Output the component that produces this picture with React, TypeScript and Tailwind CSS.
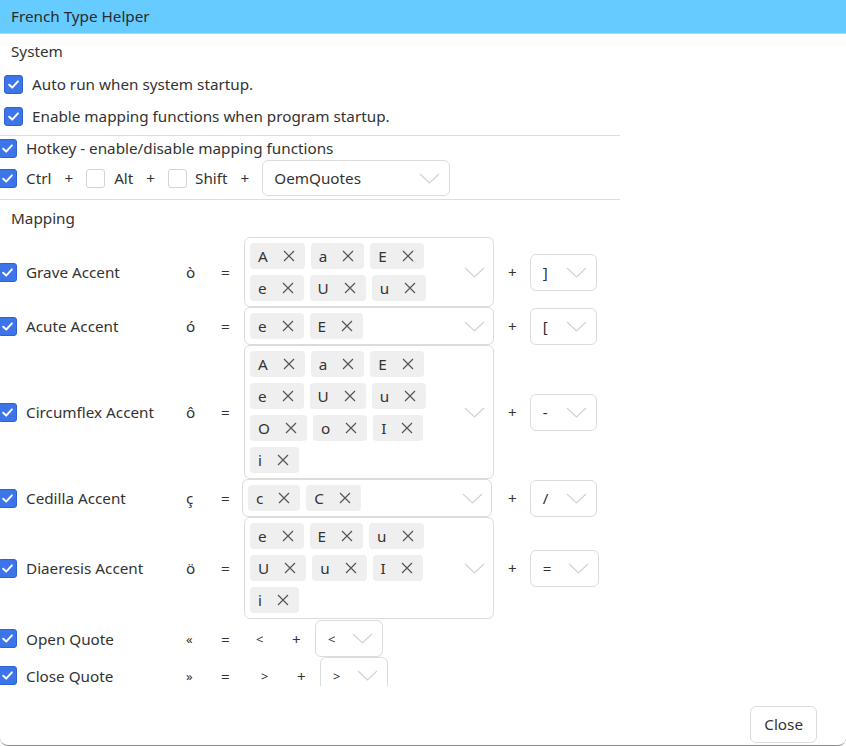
import type { ReactNode } from 'react'

const font = { fontFamily: '"Noto Sans", "Open Sans", sans-serif' }

function Check({ checked = true, className = '' }: { checked?: boolean; className?: string }) {
  if (!checked) {
    return <span className={`inline-block w-[19px] h-[19px] shrink-0 rounded-[3px] border border-[#d4d4d4] bg-white ${className}`} />
  }
  return (
    <span className={`inline-flex items-center justify-center w-[19px] h-[19px] shrink-0 rounded-[3px] bg-[#3c75ea] border border-[#2f62cf] ${className}`}>
      <svg width="13" height="13" viewBox="0 0 13 13" fill="none">
        <path d="M2.2 6.8 L5.2 9.6 L10.9 3.4" stroke="white" strokeWidth="2" strokeLinecap="round" strokeLinejoin="round" />
      </svg>
    </span>
  )
}

function Chevron() {
  return (
    <svg width="21" height="11" viewBox="0 0 21 11" fill="none" className="shrink-0">
      <path d="M1 1 L10.5 10 L20 1" stroke="#d2d2d2" strokeWidth="1.2" />
    </svg>
  )
}

function XIcon() {
  return (
    <svg width="12" height="12" viewBox="0 0 12 12" fill="none" className="shrink-0">
      <path d="M1 1 L11 11 M11 1 L1 11" stroke="#555" strokeWidth="1.2" />
    </svg>
  )
}

function Chip({ label }: { label: string }) {
  return (
    <span className="inline-flex items-center h-[26px] pl-[8px] pr-[10px] rounded-[4px] bg-[#efefef] text-[#333]">
      <span>{label}</span>
      <span className="ml-[15px]"><XIcon /></span>
    </span>
  )
}

function KeySelect({ value, className = '' }: { value: string; className?: string }) {
  return (
    <div className={`inline-flex items-center h-[37px] pl-[12px] pr-[9px] border border-[#dcdcdc] rounded-[6px] bg-white ${className}`}>
      <span className="text-[#333] min-w-[6px]">{value}</span>
      <span className="ml-[17px]"><Chevron /></span>
    </div>
  )
}

function MultiBox({ rows, className = '' }: { rows: string[][]; className?: string }) {
  return (
    <div className={`flex items-center w-[250px] border border-[#dcdcdc] rounded-[6px] pl-[5px] pr-[8px] py-[5px] ${className}`}>
      <div className="flex-1 flex flex-col gap-[6px]">
        {rows.map((r, i) => (
          <div key={i} className="flex gap-[6px]">
            {r.map((c, j) => <Chip key={j} label={c} />)}
          </div>
        ))}
      </div>
      <Chevron />
    </div>
  )
}

function MapRow({ label, ch, rows, keyVal, boxClass = '' }: { label: string; ch: string; rows: string[][]; keyVal: string; boxClass?: string }) {
  return (
    <div className="flex items-center">
      <Check className="-ml-[2px]" />
      <span className="ml-[9px] w-[160px]">{label}</span>
      <span className="w-[35px]">{ch}</span>
      <span className="w-[23px]">=</span>
      <MultiBox rows={rows} className={boxClass} />
      <span className="ml-[14px] mr-[13px]">+</span>
      <KeySelect value={keyVal} />
    </div>
  )
}

function QuoteRow({ label, ch, val, gap, top = '' }: { label: string; ch: string; val: string; gap: string; top?: string }) {
  return (
    <div className={`flex items-center leading-[16px] ${top}`}>
      <Check className="-ml-[2px]" />
      <span className="ml-[9px] w-[160px]">{label}</span>
      <span className="w-[35px] text-[13px]">{ch}</span>
      <span className={gap}>=</span>
      <span className="w-[36px] text-[13px]">{val}</span>
      <span className="w-[23px]">+</span>
      <KeySelect value={val} className="h-[36px] text-[13px]" />
    </div>
  )
}

function Plus({ children }: { children?: ReactNode }) {
  return <span className="mx-[13px]">{children ?? '+'}</span>
}

export default function App() {
  return (
    <div style={font} className="w-[846px] h-[746px] flex flex-col bg-white text-[15.25px] text-[#333] border-b border-[#8c8c8c] rounded-b-[8px] overflow-hidden">
      <div className="h-[34px] shrink-0 flex items-center pl-[11px] bg-[#66ccff] border-b border-[#a5dcfb] text-[#2a2a2a]">
        French Type Helper
      </div>

      <div className="h-[652px] overflow-hidden">
        <div className="w-[620px]">
          <div className="h-[34px] flex items-center pl-[11px]">System</div>
          <div className="h-[32px] flex items-center pl-[4px]">
            <Check />
            <span className="ml-[9px]">Auto run when system startup.</span>
          </div>
          <div className="h-[32px] flex items-center pl-[4px]">
            <Check />
            <span className="ml-[9px]">Enable mapping functions when program startup.</span>
          </div>
          <div className="mt-[3px] border-t border-[#dedede]" />
          <div className="h-[24px] flex items-center">
            <Check className="-ml-[2px]" />
            <span className="ml-[9px]">Hotkey - enable/disable mapping functions</span>
          </div>
          <div className="h-[36px] flex items-center">
            <Check className="-ml-[2px]" />
            <span className="ml-[9px]">Ctrl</span>
            <Plus />
            <Check checked={false} />
            <span className="ml-[9px]">Alt</span>
            <Plus />
            <Check checked={false} />
            <span className="ml-[8px]">Shift</span>
            <Plus />
            <div className="flex items-center w-[188px] h-[36px] border border-[#dcdcdc] rounded-[6px] pl-[11px] pr-[9px]">
              <span className="flex-1">OemQuotes</span>
              <Chevron />
            </div>
          </div>
          <div className="mt-[3px] border-t border-[#dedede]" />
        </div>

        <div className="h-[37px] flex items-center pl-[11px]">Mapping</div>
        <div className="flex flex-col">
          <MapRow label="Grave Accent" ch="ò" keyVal="]" rows={[['A', 'a', 'E'], ['e', 'U', 'u']]} />
          <MapRow label="Acute Accent" ch="ó" keyVal="[" rows={[['e', 'E']]} />
          <MapRow label="Circumflex Accent" ch="ô" keyVal="-" rows={[['A', 'a', 'E'], ['e', 'U', 'u'], ['O', 'o', 'I'], ['i']]} />
          <MapRow label="Cedilla Accent" ch="ç" keyVal="/" boxClass="-ml-[2px] mr-[2px]" rows={[['c', 'C']]} />
          <MapRow label="Diaeresis Accent" ch="ö" keyVal="=" rows={[['e', 'E', 'u'], ['U', 'u', 'I'], ['i']]} />
          <QuoteRow label="Open Quote" ch="«" val="<" gap="w-[35px]" top="mt-[1px]" />
          <QuoteRow label="Close Quote" ch="»" val=">" gap="w-[40px]" />
        </div>
      </div>

      <div className="flex-1 flex items-end justify-end pr-[29px] pb-[2px]">
        <button className="h-[37px] px-[13px] border border-[#dcdcdc] rounded-[6px] bg-white text-[#333]">
          Close
        </button>
      </div>
    </div>
  )
}
